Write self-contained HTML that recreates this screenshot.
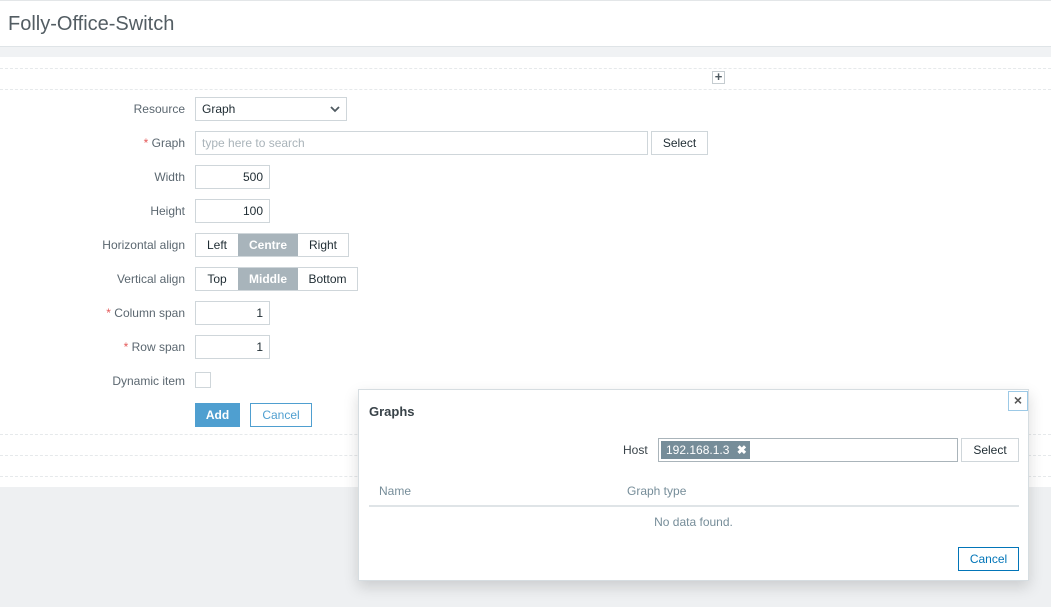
<!DOCTYPE html>
<html><head><style>
*{box-sizing:border-box;margin:0;padding:0}
body{width:1051px;height:607px;position:relative;background:#eef0f2;font-family:"Liberation Sans",sans-serif;font-size:12px;color:#1f2c33;overflow:hidden}
.a{position:absolute}
.lbl{position:absolute;right:866px;text-align:right;color:#5b6770;white-space:nowrap}
.req{color:#e45959}
.in{position:absolute;height:24px;border:1px solid #cfd6da;background:#fff;padding:0 6px;line-height:22px;color:#1f2c33}
.btn{position:absolute;height:24px;border:1px solid #cfd6da;background:#fff;line-height:22px;text-align:center;color:#1f2c33}
.dash{position:absolute;left:0;width:1051px;border-top:1px dashed #e6e9eb}
.seg{position:absolute;height:24px;display:flex;border:1px solid #cfd6da;background:#fff}
.seg span{line-height:22px;text-align:center;color:#1f2c33}
.seg .on{background:#a8b4bb;color:#fff;font-weight:bold}
</style></head><body>
<div class="a" style="left:0;top:0;width:1051px;height:47px;background:#fff;border-top:1px solid #e3e6e8;border-bottom:1px solid #dfe4e7"></div>
<div class="a" style="left:8px;top:13px;font-size:20px;color:#535d63">Folly-Office-Switch</div>
<div class="a" style="left:0;top:47px;width:1051px;height:10px;background:#f0f2f4"></div>
<div class="a" style="left:0;top:57px;width:1051px;height:430px;background:#fff"></div>
<div class="dash" style="top:68px"></div>
<div class="dash" style="top:89px"></div>
<div class="dash" style="top:434px"></div>
<div class="dash" style="top:455px"></div>
<div class="dash" style="top:476px"></div>
<div class="a" style="left:712px;top:71px;width:13px;height:13px;border:1px solid #c5ccd0;background:#fff;font-size:13px;line-height:10px;text-align:center;font-weight:bold;color:#4f5a61">+</div>

<div class="lbl" style="top:102px">Resource</div>
<div class="in" style="left:195px;top:97px;width:152px">Graph<svg class="a" style="right:6px;top:8px" width="10" height="7" viewBox="0 0 10 7"><path d="M1 1l4 4 4-4" fill="none" stroke="#4f5a61" stroke-width="1.8"/></svg></div>
<div class="lbl" style="top:136px"><span class="req">*</span> Graph</div>
<div class="in" style="left:195px;top:131px;width:453px;color:#aab4ba">type here to search</div>
<div class="btn" style="left:651px;top:131px;width:57px">Select</div>
<div class="lbl" style="top:170px">Width</div>
<div class="in" style="left:195px;top:165px;width:75px;text-align:right">500</div>
<div class="lbl" style="top:204px">Height</div>
<div class="in" style="left:195px;top:199px;width:75px;text-align:right">100</div>
<div class="lbl" style="top:238px">Horizontal align</div>
<div class="seg" style="left:195px;top:233px;width:154px"><span style="width:42px">Left</span><span class="on" style="width:60px">Centre</span><span style="width:50px">Right</span></div>
<div class="lbl" style="top:272px">Vertical align</div>
<div class="seg" style="left:195px;top:267px;width:163px"><span style="width:42px">Top</span><span class="on" style="width:60px">Middle</span><span style="width:59px">Bottom</span></div>
<div class="lbl" style="top:306px"><span class="req">*</span> Column span</div>
<div class="in" style="left:195px;top:301px;width:75px;text-align:right">1</div>
<div class="lbl" style="top:340px"><span class="req">*</span> Row span</div>
<div class="in" style="left:195px;top:335px;width:75px;text-align:right">1</div>
<div class="lbl" style="top:374px">Dynamic item</div>
<div class="a" style="left:195px;top:372px;width:16px;height:16px;border:1px solid #cfd6da;background:#fff"></div>
<div class="btn" style="left:195px;top:403px;width:45px;background:#4f9fd0;border-color:#4f9fd0;color:#fff;font-weight:bold">Add</div>
<div class="btn" style="left:250px;top:403px;width:62px;border-color:#4f9fd0;color:#4f9fd0">Cancel</div>

<div class="a" style="left:358px;top:389px;width:671px;height:192px;background:#fff;border:1px solid #d6dde1;box-shadow:0 6px 14px rgba(0,0,0,.15)">
<div class="a" style="left:10px;top:14px;font-size:13px;font-weight:bold;color:#384248">Graphs</div>
<div class="a" style="left:649px;top:1px;width:20px;height:20px;border:1px solid #9cc9e6;font-size:14px;line-height:17px;text-align:center;font-weight:bold;color:#555">×</div>
<div class="a" style="left:264px;top:53px;color:#384248">Host</div>
<div class="a" style="left:299px;top:48px;width:300px;height:24px;border:1px solid #aab4ba"><div class="a" style="left:2px;top:2px;height:18px;width:89px;background:#768d99;color:#fff;line-height:18px;padding-left:5px">192.168.1.3 <b style="margin-left:4px">✖</b></div></div>
<div class="btn" style="left:602px;top:48px;width:58px">Select</div>
<div class="a" style="left:20px;top:94px;color:#768d99">Name</div>
<div class="a" style="left:268px;top:94px;color:#768d99">Graph type</div>
<div class="a" style="left:10px;top:115px;width:650px;border-top:2px solid #dfe4e7"></div>
<div class="a" style="left:0;width:669px;top:125px;text-align:center;color:#768d99">No data found.</div>
<div class="btn" style="left:599px;top:157px;width:61px;border-color:#0275b8;color:#0275b8">Cancel</div>
</div>
</body></html>
